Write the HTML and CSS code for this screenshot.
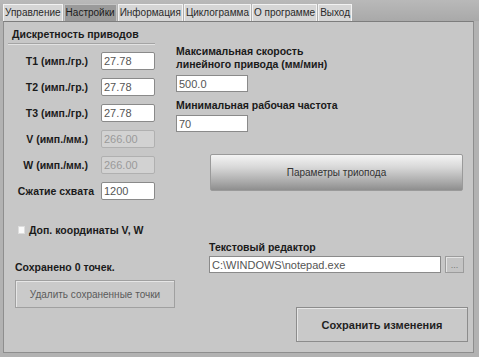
FILE: index.html
```html
<!DOCTYPE html>
<html lang="ru">

<head>
  <meta charset="UTF-8">
  <title>Настройки</title>
  <link rel="stylesheet" href="styles.css">
</head>

<body>
  <div class="tabs">
    <div class="tab">Управление</div>
    <div class="tab active">Настройки</div>
    <div class="tab">Информация</div>
    <div class="tab">Циклограмма</div>
    <div class="tab">О программе</div>
    <div class="tab">Выход</div>
  </div>

  <div class="panel">
    <div class="col-left">
      <div class="group-title">Дискретность приводов</div>

      <div class="field-row">
        <label>T1 (имп./гр.)</label>
        <input class="num" type="text" value="27.78">
      </div>
      <div class="field-row">
        <label>T2 (имп./гр.)</label>
        <input class="num" type="text" value="27.78">
      </div>
      <div class="field-row">
        <label>T3 (имп./гр.)</label>
        <input class="num" type="text" value="27.78">
      </div>
      <div class="field-row">
        <label>V (имп./мм.)</label>
        <input class="num" type="text" value="266.00" disabled>
      </div>
      <div class="field-row">
        <label>W (имп./мм.)</label>
        <input class="num" type="text" value="266.00" disabled>
      </div>
      <div class="field-row">
        <label class="wide">Сжатие схвата</label>
        <input class="num" type="text" value="1200">
      </div>

      <div class="check-row">
        <span class="check"></span>
        <span>Доп. координаты V, W</span>
      </div>

      <div class="saved">Сохранено 0 точек.</div>
      <button class="btn-delete">Удалить сохраненные точки</button>
    </div>

    <div class="col-right">
      <div class="caption">Максимальная скорость<br>линейного привода (мм/мин)</div>
      <input class="short" type="text" value="500.0">

      <div class="caption second">Минимальная рабочая частота</div>
      <input class="short short-2" type="text" value="70">

      <button class="btn-tripod">Параметры триопода</button>

      <div class="caption editor">Текстовый редактор</div>
      <div class="path-row">
        <input class="path" type="text" value="C:\WINDOWS\notepad.exe">
        <button class="btn-browse">...</button>
      </div>

      <button class="btn-save">Сохранить изменения</button>
    </div>
  </div>
</body>

</html>
```

FILE: styles.css
```css
body {
  margin: 0;
  width: 479px;
  height: 357px;
  background-color: #b2b2b2;
  font-family: 'Liberation Sans', Arial, sans-serif;
  font-size: 10.5px;
  color: #1a1a1a;
  overflow: hidden;
}

/* tab strip */
.tabs {
  display: flex;
  height: 21px;
  padding: 4px 0 0 3px;
  box-sizing: border-box;
  background: linear-gradient(#b9b9b9, #a9a9a9);
}

.tab {
  height: 16px;
  line-height: 16px;
  padding: 0 1px;
  margin-right: 1px;
  font-size: 10px;
  background-color: #d6d6d6;
  border: 1px solid #f2f2f2;
  border-bottom: none;
  color: #2a2a2a;
  white-space: nowrap;
}

.tab.active {
  background-color: #9a9a9a;
  border-color: #c4c4c4;
  color: #1a1a1a;
}

/* main panel */
.panel {
  display: flex;
  width: 471px;
  height: 332px;
  margin-left: 3px;
  box-sizing: border-box;
  padding: 6px 0 0 4px;
  background-color: #c7c7c7;
  border: 1px solid #8e8e8e;
  border-top-color: #7d7d7d;
}

.col-left {
  width: 168px;
  flex-shrink: 0;
}

.group-title {
  width: 147px;
  line-height: 13px;
  padding-bottom: 2px;
  border-bottom: 1px solid #a4a4a4;
  box-shadow: 0 1px 0 #e2e2e2;
  font-weight: bold;
  padding-left: 4px;
  box-sizing: border-box;
}

.field-row {
  display: flex;
  align-items: center;
  height: 18px;
  margin-top: 8px;
}

.field-row label {
  width: 80px;
  text-align: right;
  font-weight: bold;
  margin-right: 13px;
}

.field-row label.wide {
  width: 86px;
  margin-right: 7px;
  white-space: nowrap;
}

input {
  font-family: inherit;
  font-size: 11px;
  box-sizing: border-box;
  border: 1px solid #8a8a8a;
  background-color: #fff;
  color: #555;
  padding: 0 2px;
  margin: 0;
  outline: none;
}

input.num {
  width: 54px;
  height: 18px;
  border-radius: 2px;
}

input:disabled {
  background-color: #d2d2d2;
  border-color: #b0b0b0;
  color: #9a9a9a;
}

.check-row {
  display: flex;
  align-items: center;
  height: 13px;
  margin-top: 23px;
  padding-left: 10px;
  font-weight: bold;
}

.check {
  width: 5px;
  height: 6px;
  background-color: #fafafa;
  border: 1px solid #dedede;
  margin-right: 4px;
}

.saved {
  margin-top: 25px;
  padding-left: 7px;
  line-height: 13px;
  font-weight: bold;
}

button {
  font-family: inherit;
  margin: 0;
  padding: 0;
  cursor: pointer;
}

.btn-delete {
  display: block;
  width: 160px;
  height: 28px;
  margin: 6px 0 0 7px;
  font-size: 10px;
  color: #5a5a5a;
  background-color: #cacaca;
  border: 1px solid #a0a0a0;
  box-shadow: inset 1px 1px 0 #e6e6e6;
}

.col-right {
  flex: 1;
}

.caption {
  margin-top: 17px;
  line-height: 13px;
  font-weight: bold;
}

.caption.second {
  margin-top: 7px;
}

.caption.editor {
  margin: 50px 0 0 33px;
}

input.short {
  display: block;
  width: 72px;
  height: 17px;
  margin-top: 4px;
}

input.short-2 {
  margin-top: 3px;
}

.btn-tripod {
  display: block;
  width: 253px;
  height: 37px;
  margin: 22px 0 0 34px;
  font-size: 10px;
  color: #333;
  background: linear-gradient(#f4f4f4, #d8d8d8 35%, #a6a6a6 80%, #8e8e8e);
  border: 1px solid #9a9a9a;
  border-radius: 2px;
}

.path-row {
  display: flex;
  align-items: center;
  margin: 2px 0 0 33px;
}

input.path {
  width: 232px;
  height: 17px;
  margin-right: 4px;
}

.btn-browse {
  width: 19px;
  height: 17px;
  font-size: 9px;
  line-height: 10px;
  color: #777;
  background-color: #c4c4c4;
  border: 1px solid #9c9c9c;
  box-shadow: inset 1px 1px 0 #e4e4e4;
}

.btn-save {
  display: block;
  width: 172px;
  height: 35px;
  margin: 34px 0 0 120px;
  font-size: 11px;
  font-weight: bold;
  color: #1f1f1f;
  background-color: #c9c9c9;
  border: 1px solid #8c8c8c;
  box-shadow: inset 1px 1px 0 #e6e6e6;
}
```
